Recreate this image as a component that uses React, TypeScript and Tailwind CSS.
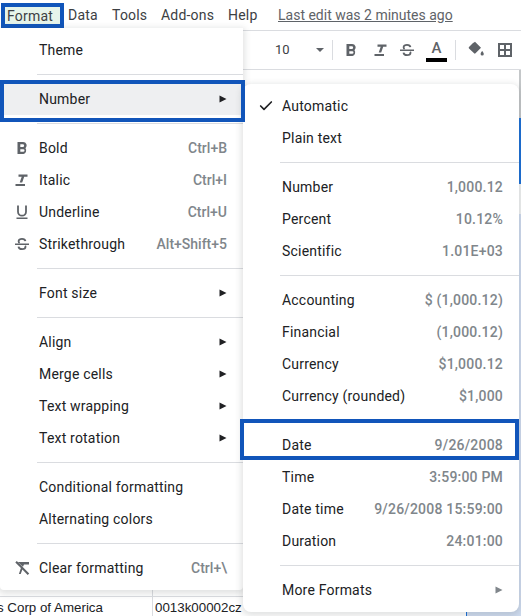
import { Check } from 'lucide-react'
import type { ReactNode } from 'react'

type Item = { label: string; hint?: string; arrow?: boolean; icon?: ReactNode; check?: boolean; hover?: boolean }

function Arrow({ dark }: { dark?: boolean }) {
  return (
    <svg width="8" height="8" viewBox="0 0 8 8" className={dark ? 'text-[#202124]' : 'text-[#80868b]'}>
      <path d="M0.5 0.5L7.5 4L0.5 7.5Z" fill="currentColor" />
    </svg>
  )
}

function BoldIcon({ className = '' }: { className?: string }) {
  return (
    <svg width="18" height="18" viewBox="0 0 18 18" className={className}>
      <path
        fillRule="evenodd"
        fill="currentColor"
        d="M4.500 3h5.500a3.600 3.600 0 0 1 2.500 6.300A3.700 3.700 0 0 1 10.500 15h-6zM7.300 5.200v2.900h2.400a1.450 1.450 0 0 0 0-2.900zM7.300 10.200v2.600h2.900a1.300 1.300 0 0 0 0-2.600z"
      />
    </svg>
  )
}

function ItalicIcon({ className = '' }: { className?: string }) {
  return (
    <svg width="18" height="18" viewBox="0 0 18 18" className={className}>
      <path fill="currentColor" d="M5.500 3.500h9v2.200h-3.300l-2 5.800H6.700l2-5.800H5.500zM2.500 13h9.500v2H2.500z" />
    </svg>
  )
}

function UnderlineIcon({ className = '' }: { className?: string }) {
  return (
    <svg width="18" height="18" viewBox="0 0 18 18" className={className}>
      <path fill="none" stroke="currentColor" strokeWidth="1.8" d="M5 2.500v6.200a4 4 0 0 0 8 0V2.500" />
      <path fill="currentColor" d="M3.500 14.500h11V16h-11z" />
    </svg>
  )
}

function StrikeIcon({ className = '' }: { className?: string }) {
  return (
    <svg width="18" height="18" viewBox="0 0 18 18" className={className}>
      <path fill="currentColor" d="M2 8.500h14V10H2z" />
      <path
        fill="none"
        stroke="currentColor"
        strokeWidth="1.8"
        d="M12.400 6.200C12.200 4.700 10.800 3.900 9 3.900c-2 0-3.400 1-3.400 2.400 0 .7.300 1.300 1 1.700M5.500 11.600c.2 1.600 1.600 2.600 3.600 2.600s3.400-1 3.400-2.400c0-.4-.1-.8-.3-1.100"
      />
    </svg>
  )
}

function ClearIcon() {
  return (
    <svg width="18" height="18" viewBox="0 0 18 18" className="text-[#5f6368]">
      <path fill="currentColor" d="M3 3h13v2.400h-5l-1 2.400-2.400-2.400L5.300 3.200zM2.300 3.500l1.500-1.500 12.400 12.400-1.500 1.500-5.300-5.300-1.700 4.400H5.900l2-6z" />
    </svg>
  )
}

function Row({ item, textX, hintClass = '' }: { item: Item; textX: string; hintClass?: string }) {
  return (
    <div className={`flex h-8 items-center pr-4 ${item.hover ? 'bg-[#eeeff1]' : ''}`}>
      <div className={`flex shrink-0 items-center justify-center ${textX}`}>{item.icon}</div>
      <span className="flex-1 text-[#202124]">{item.label}</span>
      {item.hint && <span className={`font-medium text-[#80868b] ${hintClass}`}>{item.hint}</span>}
      {item.arrow && <Arrow dark={item.hover || item.label !== 'More Formats'} />}
    </div>
  )
}

function Separator({ inset }: { inset: string }) {
  return <div className={`my-2 h-px bg-[#dadce0] ${inset}`} />
}

const left: (Item | null)[] = [
  { label: 'Theme' },
  null,
  { label: 'Number', arrow: true, hover: true },
  null,
  { label: 'Bold', hint: 'Ctrl+B', icon: <BoldIcon className="text-[#5f6368]" /> },
  { label: 'Italic', hint: 'Ctrl+I', icon: <ItalicIcon className="text-[#5f6368]" /> },
  { label: 'Underline', hint: 'Ctrl+U', icon: <UnderlineIcon className="text-[#5f6368]" /> },
  { label: 'Strikethrough', hint: 'Alt+Shift+5', icon: <StrikeIcon className="text-[#5f6368]" /> },
  null,
  { label: 'Font size', arrow: true },
  null,
  { label: 'Align', arrow: true },
  { label: 'Merge cells', arrow: true },
  { label: 'Text wrapping', arrow: true },
  { label: 'Text rotation', arrow: true },
  null,
  { label: 'Conditional formatting' },
  { label: 'Alternating colors' },
  null,
  { label: 'Clear formatting', hint: 'Ctrl+\\', icon: <ClearIcon /> },
]

const right: (Item | null)[] = [
  { label: 'Automatic', check: true },
  { label: 'Plain text' },
  null,
  { label: 'Number', hint: '1,000.12' },
  { label: 'Percent', hint: '10.12%' },
  { label: 'Scientific', hint: '1.01E+03' },
  null,
  { label: 'Accounting', hint: '$ (1,000.12)' },
  { label: 'Financial', hint: '(1,000.12)' },
  { label: 'Currency', hint: '$1,000.12' },
  { label: 'Currency (rounded)', hint: '$1,000' },
  null,
  { label: 'Date', hint: '9/26/2008' },
  { label: 'Time', hint: '3:59:00 PM' },
  { label: 'Date time', hint: '9/26/2008 15:59:00' },
  { label: 'Duration', hint: '24:01:00' },
  null,
  { label: 'More Formats', arrow: true },
]

export default function App() {
  return (
    <div className="relative h-[616px] w-[521px] overflow-hidden bg-white font-['Roboto',sans-serif] text-sm tracking-[.2px] text-[#202124]">
      {/* menu bar */}
      <div className="flex h-[30px] items-center pl-[1px] text-[14px] text-[#3c4043]">
        <span className="mt-[1px] mr-1 flex h-[25px] w-[63px] items-center border-4 border-[#1155ba] bg-[#e6f4ea] pl-[2px]">Format</span>
        <span className="w-[44px]">Data</span>
        <span className="w-[49px]">Tools</span>
        <span className="w-[67px]">Add-ons</span>
        <span className="w-[50px]">Help</span>
        <span className="tracking-normal text-[#5f6368] underline">Last edit was 2 minutes ago</span>
      </div>

      {/* toolbar */}
      <div className="flex h-10 items-center border-y border-[#dadce0] pl-[275px] text-[#5f6368]">
        <span className="w-[40px] text-[13px] tracking-normal text-[#3c4043]">10</span>
        <svg width="8" height="4" viewBox="0 0 8 4" className="ml-[1px]">
          <path d="M0 0h8L4 4z" fill="currentColor" />
        </svg>
        <div className="mr-[9px] ml-2 h-5 w-px bg-[#dadce0]" />
        <BoldIcon className="mr-3" />
        <ItalicIcon className="mr-2" />
        <StrikeIcon className="mr-[10px]" />
        <div className="relative mr-2 flex h-[26px] w-[21px] flex-col items-center">
          <span className="mt-[1px] text-[15px] leading-[20px] font-medium">A</span>
          <div className="absolute bottom-[1px] h-1 w-[21px] bg-black" />
        </div>
        <div className="mr-[11px] h-5 w-px bg-[#dadce0]" />
        <svg width="18" height="18" viewBox="0 0 18 18" className="mr-[13px]">
          <path fill="currentColor" d="M7 1.500 8 .8l6 6-5.500 5.500a1 1 0 0 1-1.400 0L2 7.400a1 1 0 0 1 0-1.400L6 2zM15.200 10s1.600 1.900 1.600 3a1.600 1.600 0 0 1-3.200 0c0-1.100 1.600-3 1.600-3" />
        </svg>
        <svg width="14" height="14" viewBox="0 0 14 14">
          <path fill="currentColor" fillRule="evenodd" d="M0 0h14v14H0zM2 2v4h4V2zM8 2v4h4V2zM2 8v4h4V8zM8 8v4h4V8z" />
        </svg>
      </div>

      {/* sheet column showing to the right of the submenu */}
      <div className="flex h-[546px] justify-end">
        <div className="flex w-[2px] flex-col">
          <div className="h-[48px] bg-[#c4c7c9]" />
          <div className="h-[66px] bg-[#1a6fd8]" />
          <div className="h-[30px] bg-[#f1f3f4]" />
          <div className="flex-1 bg-[#cfdcf0]" />
        </div>
      </div>

      {/* bits of the sheet showing below the menus */}
      <div className="absolute right-0 bottom-0 left-0 text-[13.33px] leading-[19px] tracking-normal text-[#202124] font-['Liberation_Sans',sans-serif]">
        <div className="flex h-[24px] border-b border-[#dadce0]">
          <div className="w-[153px] border-r border-[#dadce0]" />
        </div>
        <div className="flex h-[19px] leading-[22px] whitespace-nowrap">
          <div className="w-[153px] border-r border-[#dadce0]">
            <span className="-ml-[3px] block">s Corp of America</span>
          </div>
          <div className="w-[90px] pl-[2px]">0013k00002cz</div>
          <div className="w-[224px] border-r border-[#1a6fd8]" />
          <div className="flex-1 bg-[#cfdcf0]" />
        </div>
      </div>

      {/* format menu */}
      <div className="absolute top-[28px] left-0 w-[243px] rounded-b bg-white py-[6px] shadow-[0_2px_6px_2px_rgba(60,64,67,0.15)]">
        {left.map((item, i) =>
          item ? (
            <Row key={i} item={item} textX="w-[39px] pl-1" hintClass="tracking-normal" />
          ) : (
            <Separator key={i} inset="ml-[37px]" />
          )
        )}
      </div>

      {/* number submenu */}
      <div className="absolute top-[84px] left-[243px] w-[276px] rounded-lg bg-white py-[6px] shadow-[0_2px_6px_2px_rgba(60,64,67,0.15)]">
        {right.map((item, i) =>
          item ? (
            <Row
              key={i}
              item={{ ...item, icon: item.check ? <Check size={16} strokeWidth={2.5} className="text-[#202124]" /> : undefined }}
              textX="w-[39px] pl-[7px]"
            />
          ) : (
            <Separator key={i} inset="ml-[37px]" />
          )
        )}
      </div>

      {/* blue annotation boxes */}
      <div className="absolute top-[80px] left-0 h-[42px] w-[245px] border-4 border-[#1155ba]" />
      <div className="absolute top-[419px] left-[240px] h-[41px] w-[279px] border-4 border-[#1155ba]" />
    </div>
  )
}
